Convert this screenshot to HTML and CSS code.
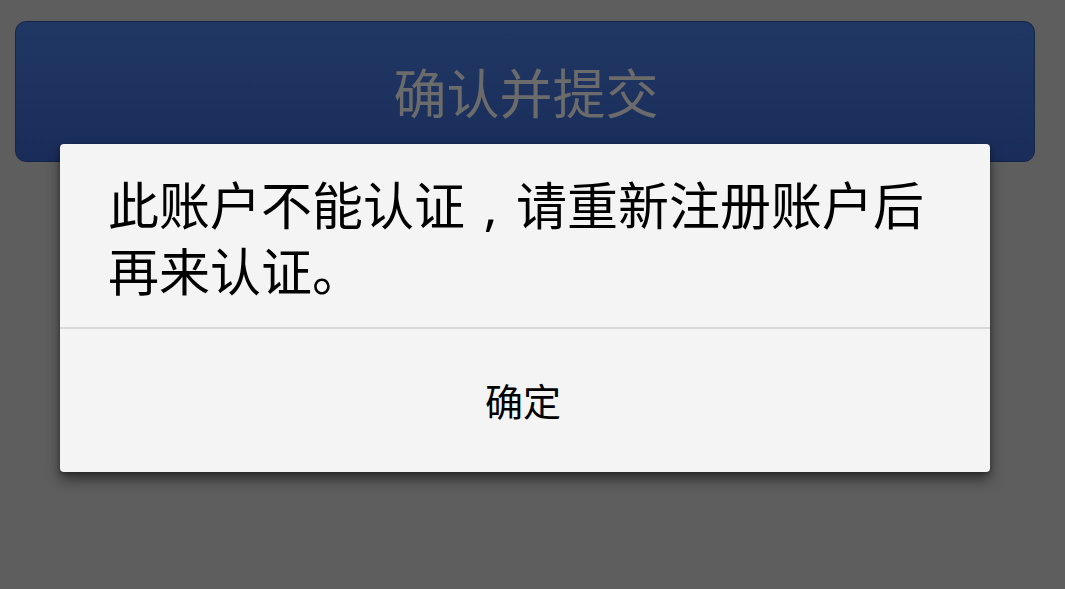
FILE: index.html
```html
<!DOCTYPE html>
<html lang="zh-CN">
<head>
<meta charset="utf-8">
<title>确认并提交</title>
<link rel="stylesheet" href="styles.css">
</head>
<body>
<div class="screen">
  <div class="submit-btn">确认并提交</div>
  <div class="dialog">
    <div class="dialog-msg">此账户不能认证<span class="punct">,</span>请重新注册账户后再来认证。</div>
    <div class="dialog-actions">
      <div class="dialog-ok">确定</div>
    </div>
  </div>
</div>
</body>
</html>
```

FILE: styles.css
```css
html, body {
  margin: 0;
  padding: 0;
  background: #5e5e5e;
}
body {
  font-family: "Noto Sans CJK SC", "Noto Sans", sans-serif;
}
.screen {
  position: relative;
  width: 1065px;
  height: 589px;
  overflow: hidden;
  padding: 21px 0 0 15px;
  box-sizing: border-box;
}
.submit-btn {
  width: 1020px;
  height: 141px;
  box-sizing: border-box;
  border: 1px solid #14254a;
  border-radius: 11px;
  background: linear-gradient(#203764, #1a2d5a);
  color: #6b6b6b;
  font-size: 53px;
  display: flex;
  align-items: center;
  justify-content: center;
  padding-bottom: 2px;
  padding-left: 2px;
}
.dialog {
  position: absolute;
  left: 60px;
  top: 144px;
  width: 930px;
  height: 328px;
  background: #f4f4f4;
  border-radius: 4px;
  box-shadow: 0 8px 14px rgba(0,0,0,0.45), 0 2px 4px rgba(0,0,0,0.3);
  display: flex;
  flex-direction: column;
}
.dialog-msg {
  padding: 27px 40px 26px 48px;
  font-size: 51px;
  line-height: 64px;
  color: #000;
  border-bottom: 2px solid #d9d9d9;
}
.punct {
  display: inline-block;
  width: 1em;
  text-align: center;
  font-family: "Noto Sans", sans-serif;
}
.dialog-actions {
  flex: 1;
  display: flex;
  align-items: center;
  justify-content: center;
}
.dialog-ok {
  font-size: 38px;
  color: #000;
  padding-right: 4px;
  padding-bottom: 2px;
}
```
